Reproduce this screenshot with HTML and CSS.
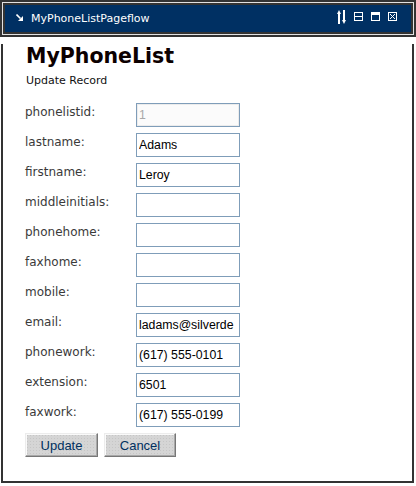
FILE: index.html
```html
<!DOCTYPE html>
<html lang="en">
    <head>
        <meta charset="utf-8">
        <title>MyPhoneList - Update Record</title>
        <link rel="stylesheet" href="styles.css">
    </head>
    <body>
        <div class="portlet">
            <div class="titlebar">
                <div class="titlebar-inner">
                    <svg class="tb-arrow" width="7" height="7" viewBox="0 0 7 7">
                        <path d="M0.5 0.5 L4.5 4.5" stroke="#fff" stroke-width="1.6"/>
                        <polygon points="7,2 7,7 2,7" fill="#fff"/>
                    </svg>
                    <span class="tb-title">MyPhoneListPageflow</span>
                    <div class="tb-icons">
                        <svg width="9" height="14" viewBox="0 0 9 14">
                            <rect x="1" y="3" width="2" height="11" fill="#fff"/>
                            <polygon points="0,4 2,0 4,4" fill="#fff"/>
                            <rect x="6" y="0" width="2" height="11" fill="#fff"/>
                            <polygon points="5,10 7,14 9,10" fill="#fff"/>
                        </svg>
                        <svg width="9" height="9" viewBox="0 0 9 9">
                            <rect x="0.5" y="0.5" width="8" height="8" fill="none" stroke="#fff"/>
                            <path d="M0.5 4.5 H8.5" stroke="#fff"/>
                        </svg>
                        <svg width="9" height="9" viewBox="0 0 9 9">
                            <rect x="0.5" y="0.5" width="8" height="8" fill="none" stroke="#fff"/>
                            <rect x="0" y="0" width="9" height="3" fill="#fff"/>
                        </svg>
                        <svg width="9" height="9" viewBox="0 0 9 9">
                            <rect x="0.5" y="0.5" width="8" height="8" fill="none" stroke="#fff"/>
                            <path d="M2 2 L7 7 M7 2 L2 7" stroke="#fff"/>
                        </svg>
                    </div>
                </div>
            </div>
            <div class="portlet-body">
                <h1 class="page-title">MyPhoneList</h1>
                <div class="subtitle">Update Record</div>
                <form class="record" onsubmit="return false">
                    <label for="phonelistid">phonelistid:</label>
                    <input id="phonelistid" type="text" value="1" disabled>
                    <label for="lastname">lastname:</label>
                    <input id="lastname" type="text" value="Adams">
                    <label for="firstname">firstname:</label>
                    <input id="firstname" type="text" value="Leroy">
                    <label for="middleinitials">middleinitials:</label>
                    <input id="middleinitials" type="text" value="">
                    <label for="phonehome">phonehome:</label>
                    <input id="phonehome" type="text" value="">
                    <label for="faxhome">faxhome:</label>
                    <input id="faxhome" type="text" value="">
                    <label for="mobile">mobile:</label>
                    <input id="mobile" type="text" value="">
                    <label for="email">email:</label>
                    <input id="email" type="text" value="ladams@silverde">
                    <label for="phonework">phonework:</label>
                    <input id="phonework" type="text" value="(617) 555-0101">
                    <label for="extension">extension:</label>
                    <input id="extension" type="text" value="6501">
                    <label for="faxwork">faxwork:</label>
                    <input id="faxwork" type="text" value="(617) 555-0199">
                    <div class="buttons">
                        <button type="submit" class="btn btn-update">Update</button>
                        <button type="button" class="btn btn-cancel">Cancel</button>
                    </div>
                </form>
            </div>
        </div>
    </body>
</html>
```

FILE: styles.css
```css
body {
    margin: 0;
    background: #fff;
    font-family: "DejaVu Sans", Verdana, sans-serif;
}
.portlet {
    width: 416px;
}
.titlebar {
    border: 2px solid #333;
    padding: 1px;
    background: #e2e2e2;
}
.titlebar-inner {
    display: flex;
    align-items: center;
    height: 27px;
    border: 2px solid #333;
    background: #003063;
    padding: 0 14px 0 11px;
}
.tb-arrow {
    display: block;
    margin-top: -3px;
}
.tb-title {
    margin-left: 8px;
    color: #fff;
    font-size: 11px;
    line-height: 13px;
    flex: 1;
}
.tb-icons {
    display: flex;
    align-items: center;
    gap: 8px;
    margin-bottom: 4px;
}
.tb-icons svg {
    display: block;
}
.portlet-body {
    margin: 0 2px 0 1px;
    border: 2px solid #333;
    border-top: 0;
    padding: 0 0 24px 22px;
}
.page-title {
    margin: 7px 0 0 1px;
    font-size: 20.5px;
    line-height: 25px;
    font-weight: bold;
    color: #0c0000;
}
.subtitle {
    margin: 5px 0 0 1px;
    font-size: 11px;
    line-height: 13px;
    color: #111;
}
.record {
    display: grid;
    grid-template-columns: 111px 104px;
    row-gap: 6px;
    margin-top: 16px;
}
.record label {
    align-self: start;
    padding-top: 1px;
    font-size: 12px;
    line-height: 17px;
    color: #3a3a3a;
}
.record input {
    box-sizing: border-box;
    width: 104px;
    height: 24px;
    margin: 0;
    padding: 0 2px;
    border: 1px solid #7f9db9;
    font-family: "Liberation Sans", Arial, sans-serif;
    font-size: 12.3px;
    color: #000;
    background: #fff;
    outline: none;
}
.record input:disabled {
    color: #a8a8a8;
    background: #fbfbfb;
    box-shadow: inset 0 0 0 1px #ececec;
}
.buttons {
    grid-column: 1 / -1;
    display: flex;
    gap: 6px;
}
.btn {
    box-sizing: border-box;
    height: 24px;
    margin: 0;
    padding: 0;
    border: 1px solid;
    border-color: #ececec #777 #777 #ececec;
    box-shadow: inset -1px -1px 0 #a8a8a8, inset 1px 1px 0 #fafafa;
    background-color: #d5d5d5;
    background-image: radial-gradient(#c6c6c6 0.6px, transparent 0.8px);
    background-size: 3px 3px;
    color: #00305f;
    font-family: "Liberation Sans", Arial, sans-serif;
    font-size: 13px;
}
.btn-update {
    width: 73px;
}
.btn-cancel {
    width: 72px;
}
```
